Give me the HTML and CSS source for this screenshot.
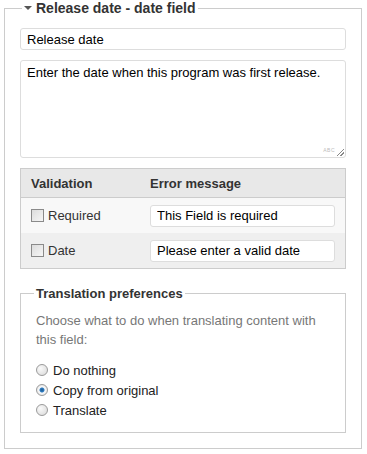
FILE: index.html
```html
<!DOCTYPE html>
<html lang="en">
<head>
  <meta charset="UTF-8" />
  <title>Release date - date field</title>
  <link rel="stylesheet" href="styles.css">
</head>
<body>

  <fieldset class="field-box">
    <legend class="field-title"><span class="caret"></span>Release date - date field</legend>

    <input type="text" class="text-input label-input" value="Release date">

    <div class="desc-wrap">
      <textarea class="desc-input">Enter the date when this program was first release.</textarea>
      <span class="spell-mark">ABC</span>
    </div>

    <table class="rules">
      <thead>
        <tr>
          <th class="col-rule">Validation</th>
          <th>Error message</th>
        </tr>
      </thead>
      <tbody>
        <tr class="odd">
          <td><label class="check"><input type="checkbox"> Required</label></td>
          <td><input type="text" class="text-input" value="This Field is required"></td>
        </tr>
        <tr class="even">
          <td><label class="check"><input type="checkbox"> Date</label></td>
          <td><input type="text" class="text-input" value="Please enter a valid date"></td>
        </tr>
      </tbody>
    </table>

    <fieldset class="translation">
      <legend>Translation preferences</legend>
      <p class="hint">Choose what to do when translating content with this field:</p>
      <label class="choice"><input type="radio" name="translate"> Do nothing</label>
      <label class="choice"><input type="radio" name="translate" checked> Copy from original</label>
      <label class="choice"><input type="radio" name="translate"> Translate</label>
    </fieldset>
  </fieldset>

</body>
</html>
```

FILE: styles.css
```css
body {
  margin: 0;
  font-family: "Liberation Sans", Arial, sans-serif;
  font-size: 13px;
  color: #222;
  background: #fff;
}

.field-box {
  width: 326px;
  margin: 0 0 0 4px;
  padding: 12px 15px 15px 15px;
  border: 1px solid #ccc;
}

.field-title {
  margin-left: 2px;
  padding: 0 2px;
  font-size: 14px;
  line-height: 16px;
  font-weight: bold;
  color: #333;
}

.caret {
  display: inline-block;
  width: 0;
  height: 0;
  margin: 0 4px 3px 0;
  border-left: 4px solid transparent;
  border-right: 4px solid transparent;
  border-top: 4px solid #555;
  vertical-align: middle;
}

.text-input {
  display: block;
  box-sizing: border-box;
  width: 100%;
  height: 22px;
  margin: 0;
  padding: 0 6px;
  border: 1px solid #ddd;
  border-radius: 3px;
  font-family: inherit;
  font-size: 13px;
  color: #000;
  background: #fff;
}

.desc-wrap {
  position: relative;
  margin-top: 10px;
}

.desc-input {
  display: block;
  box-sizing: border-box;
  width: 100%;
  height: 98px;
  margin: 0;
  padding: 4px 6px;
  border: 1px solid #ddd;
  border-radius: 3px;
  font-family: inherit;
  font-size: 13px;
  line-height: 16px;
  color: #000;
  resize: none;
}

.spell-mark {
  position: absolute;
  right: 11px;
  bottom: 5px;
  font-size: 5px;
  color: #bbb;
  letter-spacing: 0.5px;
}

.desc-wrap::after {
  content: "";
  position: absolute;
  right: 2px;
  bottom: 2px;
  width: 7px;
  height: 7px;
  background: linear-gradient(135deg, transparent 45%, #888 45%, #888 55%, transparent 55%, transparent 70%, #888 70%, #888 80%, transparent 80%);
}

.rules {
  width: 100%;
  margin-top: 10px;
  border-collapse: collapse;
  border: 1px solid #ccc;
}

.rules th {
  height: 28px;
  padding: 0 10px;
  text-align: left;
  font-size: 13px;
  color: #333;
  background: #e8e8e8;
  border-bottom: 1px solid #ccc;
}

.rules .col-rule {
  width: 99px;
}

.rules td {
  height: 35px;
  padding: 0 10px;
}

.rules .odd td {
  background: #f8f8f8;
}

.rules .even td {
  background: #efefef;
}

.check {
  display: flex;
  align-items: center;
  gap: 4px;
  color: #333;
}

.check input {
  appearance: none;
  width: 13px;
  height: 13px;
  margin: 0;
  border: 1px solid #8a8a8a;
  background: linear-gradient(135deg, #dcdcdc, #f6f6f6);
}

.translation {
  margin: 17px 0 0 0;
  padding: 10px 15px 12px 15px;
  border: 1px solid #ccc;
}

.translation legend {
  margin-left: -2px;
  padding: 0 2px;
  font-size: 13px;
  line-height: 15px;
  font-weight: bold;
  color: #333;
}

.hint {
  margin: 0 0 11px 0;
  line-height: 19px;
  color: #777;
}

.choice {
  display: flex;
  align-items: center;
  gap: 5px;
  height: 20px;
}

.choice input {
  appearance: none;
  width: 12px;
  height: 12px;
  margin: 0;
  border: 1px solid #9a9a9a;
  border-radius: 50%;
  background: radial-gradient(circle at 35% 35%, #fafafa, #d8d8d8);
}

.choice input:checked {
  background: radial-gradient(circle, #1c5a8f 0, #2e7bc0 2px, #fafafa 3px, #d8d8d8);
}
```
